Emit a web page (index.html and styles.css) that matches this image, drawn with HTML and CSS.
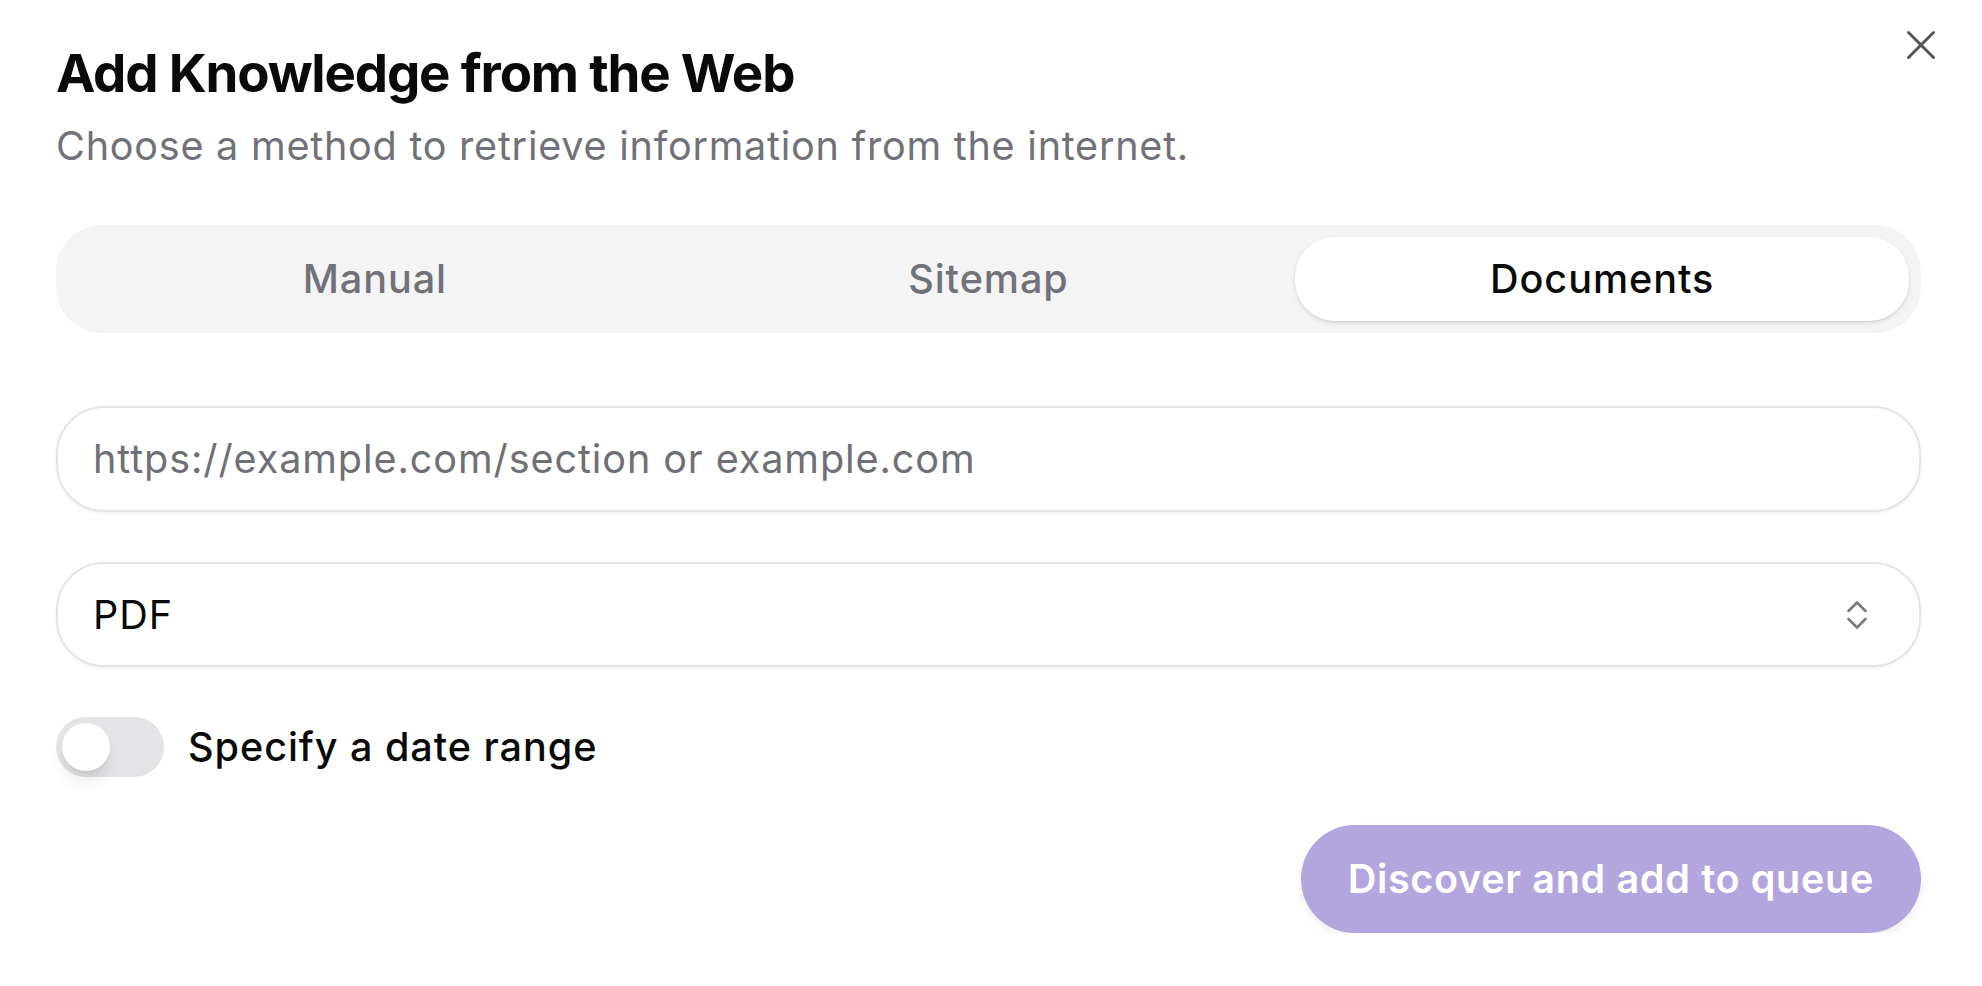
FILE: index.html
```html
<!DOCTYPE html>
<html lang="en">
<head>
<meta charset="utf-8">
<title>Add Knowledge from the Web</title>
<link rel="stylesheet" href="styles.css">
</head>
<body>
<div class="dialog">
  <button class="close" aria-label="Close">
    <svg width="32" height="32" viewBox="0 0 32 32" fill="none" stroke="currentColor" stroke-width="3" stroke-linecap="round"><path d="M3.5 3.5 28.5 28.5"/><path d="M28.5 3.5 3.5 28.5"/></svg>
  </button>
  <h1 class="title">Add Knowledge from the Web</h1>
  <p class="subtitle">Choose a method to retrieve information from the internet.</p>

  <div class="tabs">
    <div class="tab">Manual</div>
    <div class="tab">Sitemap</div>
    <div class="tab active">Documents</div>
  </div>

  <div class="field">
    <span class="placeholder">https://example.com/section or example.com</span>
  </div>

  <div class="field select">
    <span class="value">PDF</span>
    <svg class="chev" width="24" height="34" viewBox="0 0 24 34" fill="none" stroke="currentColor" stroke-width="2.6" stroke-linecap="round" stroke-linejoin="round"><path d="M3.5 13 12 4.5 20.5 13"/><path d="M3.5 21 12 29.5 20.5 21"/></svg>
  </div>

  <div class="toggle-row">
    <div class="switch"><div class="thumb"></div></div>
    <span class="label">Specify a date range</span>
  </div>

  <div class="actions">
    <button class="primary">Discover and add to queue</button>
  </div>
</div>
</body>
</html>
```
FILE: styles.css
```css
* { box-sizing: border-box; }
html, body { margin: 0; padding: 0; background: #ffffff; }
body { font-family: Inter, "Noto Sans", sans-serif; color: #0a0a0a; }

.dialog {
  position: relative;
  padding: 38px 61px 0 56px;
  display: flex;
  flex-direction: column;
}

.close {
  position: absolute;
  top: 29px;
  left: 1905px;
  width: 32px;
  height: 32px;
  padding: 0;
  border: 0;
  background: transparent;
  color: #555558;
  display: flex;
}

.title {
  margin: 0;
  font-size: 52.8px;
  line-height: 70px;
  font-weight: 700;
  letter-spacing: -0.022em;
  color: #0a0a0a;
}

.subtitle {
  margin: 7px 0 0;
  font-size: 39.6px;
  line-height: 62px;
  letter-spacing: 0.75px;
  color: #71717a;
}

.tabs {
  margin-top: 48px;
  height: 108px;
  padding: 12px;
  background: #f4f4f4;
  border-radius: 46px;
  display: grid;
  grid-template-columns: 1fr 1fr 1fr;
}

.tab {
  display: flex;
  align-items: center;
  justify-content: center;
  font-size: 39.6px;
  font-weight: 500;
  letter-spacing: 0.95px;
  color: #71717a;
  border-radius: 40px;
}

.tab.active {
  background: #ffffff;
  color: #0a0a0a;
  box-shadow: 0 2px 5px rgba(0, 0, 0, 0.1), 0 1px 2px rgba(0, 0, 0, 0.06);
}

.field {
  margin-top: 73px;
  height: 106px;
  border: 2.5px solid #e4e4e6;
  border-radius: 48px;
  padding: 0 35px;
  display: flex;
  align-items: center;
  font-size: 39.6px;
  letter-spacing: 0.9px;
  box-shadow: 0 2px 3px rgba(0, 0, 0, 0.05);
}

.placeholder { color: #6f6f78; }

.select {
  margin-top: 50px;
  height: 105px;
  justify-content: space-between;
  padding-right: 50px;
}

.value { color: #0a0a0a; }

.chev { color: #7a7a7c; }

.toggle-row {
  margin-top: 50px;
  display: flex;
  align-items: center;
  gap: 24px;
}

.switch {
  width: 108px;
  height: 60px;
  border-radius: 30px;
  background: #e4e4e7;
  padding: 6px;
  display: flex;
}

.thumb {
  width: 48px;
  height: 48px;
  border-radius: 50%;
  background: #ffffff;
  box-shadow: 0 12px 18px -4px rgba(0, 0, 0, 0.12), 0 4px 6px -2px rgba(0, 0, 0, 0.06);
}

.label {
  font-size: 39.6px;
  font-weight: 500;
  letter-spacing: 0.95px;
  color: #0a0a0a;
}

.actions {
  margin-top: 48px;
  display: flex;
  justify-content: flex-end;
}

.primary {
  height: 108px;
  padding: 0 47px;
  border: 0;
  border-radius: 54px;
  background: #b3a5de;
  color: #ffffff;
  font-family: Inter, "Noto Sans", sans-serif;
  font-size: 39.6px;
  font-weight: 600;
  letter-spacing: 0.65px;
  box-shadow: 0 4px 8px rgba(0, 0, 0, 0.08);
}
```
